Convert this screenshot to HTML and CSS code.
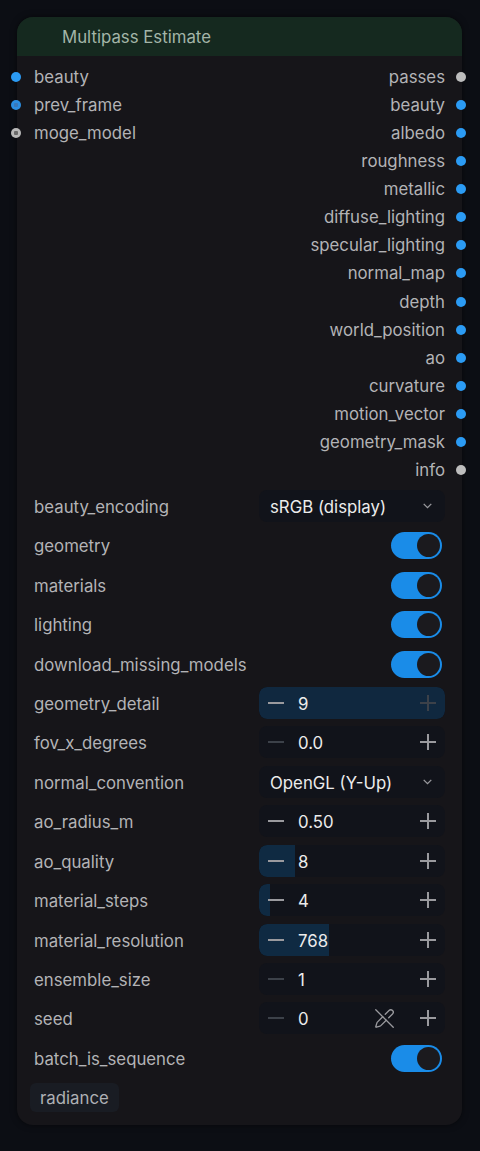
FILE: index.html
```html
<!DOCTYPE html>
<html>
<head>
<meta charset="utf-8">
<link rel="stylesheet" href="styles.css">
</head>
<body>
<div class="node">
  <div class="header">Multipass Estimate</div>
  <div class="slots">
    <div class="inputs">
      <div class="slot in"><span class="dot blue"></span><span>beauty</span></div>
      <div class="slot in"><span class="dot blue opt"></span><span>prev_frame</span></div>
      <div class="slot in"><span class="dot grey opt"></span><span>moge_model</span></div>
    </div>
    <div class="outputs">
      <div class="slot out"><span>passes</span><span class="dot grey"></span></div>
      <div class="slot out"><span>beauty</span><span class="dot blue"></span></div>
      <div class="slot out"><span>albedo</span><span class="dot blue"></span></div>
      <div class="slot out"><span>roughness</span><span class="dot blue"></span></div>
      <div class="slot out"><span>metallic</span><span class="dot blue"></span></div>
      <div class="slot out"><span>diffuse_lighting</span><span class="dot blue"></span></div>
      <div class="slot out"><span>specular_lighting</span><span class="dot blue"></span></div>
      <div class="slot out"><span>normal_map</span><span class="dot blue"></span></div>
      <div class="slot out"><span>depth</span><span class="dot blue"></span></div>
      <div class="slot out"><span>world_position</span><span class="dot blue"></span></div>
      <div class="slot out"><span>ao</span><span class="dot blue"></span></div>
      <div class="slot out"><span>curvature</span><span class="dot blue"></span></div>
      <div class="slot out"><span>motion_vector</span><span class="dot blue"></span></div>
      <div class="slot out"><span>geometry_mask</span><span class="dot blue"></span></div>
      <div class="slot out"><span>info</span><span class="dot grey"></span></div>
    </div>
  </div>
  <div class="widgets">
    <div class="wrow"><span class="wlabel">beauty_encoding</span>
      <div class="combo"><span>sRGB (display)</span><svg class="chev" viewBox="0 0 12 12"><path d="M2.5 4.5 L6 8 L9.5 4.5"/></svg></div></div>
    <div class="wrow"><span class="wlabel">geometry</span><div class="tgl-wrap"><span class="toggle"><span class="knob"></span></span></div></div>
    <div class="wrow"><span class="wlabel">materials</span><div class="tgl-wrap"><span class="toggle"><span class="knob"></span></span></div></div>
    <div class="wrow"><span class="wlabel">lighting</span><div class="tgl-wrap"><span class="toggle"><span class="knob"></span></span></div></div>
    <div class="wrow"><span class="wlabel">download_missing_models</span><div class="tgl-wrap"><span class="toggle"><span class="knob"></span></span></div></div>
    <div class="wrow"><span class="wlabel">geometry_detail</span>
      <div class="num"><span class="fill full" style="width:100%"></span><span class="minus"></span><span class="val">9</span><span class="plus dim"></span></div></div>
    <div class="wrow"><span class="wlabel">fov_x_degrees</span>
      <div class="num"><span class="minus dim"></span><span class="val">0.0</span><span class="plus"></span></div></div>
    <div class="wrow"><span class="wlabel">normal_convention</span>
      <div class="combo"><span>OpenGL (Y-Up)</span><svg class="chev" viewBox="0 0 12 12"><path d="M2.5 4.5 L6 8 L9.5 4.5"/></svg></div></div>
    <div class="wrow"><span class="wlabel">ao_radius_m</span>
      <div class="num"><span class="minus"></span><span class="val">0.50</span><span class="plus"></span></div></div>
    <div class="wrow"><span class="wlabel">ao_quality</span>
      <div class="num"><span class="fill" style="width:36px"></span><span class="minus"></span><span class="val">8</span><span class="plus"></span></div></div>
    <div class="wrow"><span class="wlabel">material_steps</span>
      <div class="num"><span class="fill" style="width:11px"></span><span class="minus"></span><span class="val">4</span><span class="plus"></span></div></div>
    <div class="wrow"><span class="wlabel">material_resolution</span>
      <div class="num"><span class="fill" style="width:70px"></span><span class="minus"></span><span class="val">768</span><span class="plus"></span></div></div>
    <div class="wrow"><span class="wlabel">ensemble_size</span>
      <div class="num"><span class="minus dim"></span><span class="val">1</span><span class="plus"></span></div></div>
    <div class="wrow"><span class="wlabel">seed</span>
      <div class="num"><span class="minus dim"></span><span class="val">0</span>
        <svg class="seedico" viewBox="0 0 24 24"><path d="m10 10-6.157 6.162a2 2 0 0 0-.5.833l-1.322 4.36a.5.5 0 0 0 .622.624l4.358-1.323a2 2 0 0 0 .83-.5L14 13.982"/><path d="m12.829 7.172 4.359-4.346a1 1 0 1 1 3.986 3.986l-4.353 4.353"/><path d="m2 2 20 20"/></svg>
        <span class="plus"></span></div></div>
    <div class="wrow"><span class="wlabel">batch_is_sequence</span><div class="tgl-wrap"><span class="toggle"><span class="knob"></span></span></div></div>
  </div>
  <div class="chip">radiance</div>
</div>
</body>
</html>
```
FILE: styles.css
```css
* { box-sizing: border-box; }
html, body { margin: 0; padding: 0; }
body {
  background: #0c0e14;
  font-family: Inter, "Noto Sans", "Liberation Sans", sans-serif;
  font-size: 16.8px;
  color: #b3b3b6;
  width: 480px;
  height: 1151px;
  padding: 17px 0 0 17px;
}
.node {
  width: 445px;
  height: 1108px;
  background: #161519;
  border-radius: 16px;
  box-shadow: 0 0 6px rgba(0,0,0,0.5);
}
.header {
  height: 39px;
  background: #15291f;
  border-radius: 16px 16px 0 0;
  padding-left: 45px;
  padding-top: 1px;
  line-height: 39px;
  color: #a3b5a8;
}
.slots {
  display: flex;
  justify-content: space-between;
  padding-top: 7px;
}
.inputs, .outputs { display: flex; flex-direction: column; }
.slot {
  height: 28.07px;
  display: flex;
  align-items: center;
}
.slot.in { margin-left: -6px; gap: 13px; }
.slot.out { justify-content: flex-end; margin-right: -4px; gap: 11px; }
.dot {
  width: 10px; height: 10px; border-radius: 50%;
  display: inline-block; flex: none;
}
.dot.blue { background: #2b9bf4; }
.dot.grey { background: #bdbdbd; }
.dot.blue.opt { background: radial-gradient(circle, #3a78b8 0 2px, #2b8de0 2.5px); }
.dot.grey.opt { background: radial-gradient(circle, #6a6a6a 0 2px, #b8b8b8 2.5px); }

.widgets {
  display: flex;
  flex-direction: column;
  gap: 7.43px;
  padding: 6px 17px 0 17px;
}
.wrow {
  height: 32px;
  display: flex;
  align-items: center;
  justify-content: space-between;
}
.wlabel { padding-top: 2px; }
.num, .combo {
  position: relative;
  width: 186px;
  height: 32px;
  border-radius: 8px;
  background: #11131a;
  display: flex;
  align-items: center;
  overflow: hidden;
  color: #ececec;
}
.combo { padding-left: 11px; justify-content: space-between; padding-right: 11px; }
.combo > span { padding-top: 2px; }
.chev { width: 13px; height: 13px; fill: none; stroke: #9a9a9e; stroke-width: 1.2; }
.fill {
  position: absolute; left: 0; top: 0; bottom: 0;
  background: #0f2a42;
  border-radius: 8px 0 0 8px;
}
.fill.full { border-radius: 8px; background: #10283f; }
.minus, .plus {
  position: relative;
  width: 16px; height: 16px; flex: none;
}
.minus { margin-left: 9px; }
.minus::before, .plus::before, .plus::after {
  content: ""; position: absolute; background: #9a9a9e;
}
.minus::before, .plus::before { left: 0; right: 0; top: 7px; height: 2px; }
.plus::after { top: 0; bottom: 0; left: 7px; width: 2px; }
.minus.dim::before, .plus.dim::before, .plus.dim::after { background: #3c4149; }
.plus { margin-left: auto; margin-right: 9px; }
.val { position: relative; margin-left: 14px; padding-top: 2px; }
.seedico {
  width: 21px; height: 21px; margin-left: auto; margin-right: 25px;
  fill: none; stroke: #9a9a9e; stroke-width: 1.5; stroke-linecap: round; stroke-linejoin: round;
}
.seedico + .plus { margin-left: 0; }
.tgl-wrap { width: 186px; display: flex; justify-content: flex-end; padding-right: 3px; padding-top: 1px; }
.toggle {
  width: 51px; height: 27px; border-radius: 14px;
  background: #1a8ce8;
  display: flex; align-items: center; justify-content: flex-end;
  padding-right: 2px;
}
.knob {
  width: 23px; height: 23px; border-radius: 50%;
  background: #1b1a1e;
}
.chip {
  display: inline-block;
  margin: 9px 0 0 13px;
  height: 29px;
  line-height: 29px;
  padding: 1px 10px 0;
  background: #191c23;
  border-radius: 6px;
  color: #aeb0b4;
}
```
